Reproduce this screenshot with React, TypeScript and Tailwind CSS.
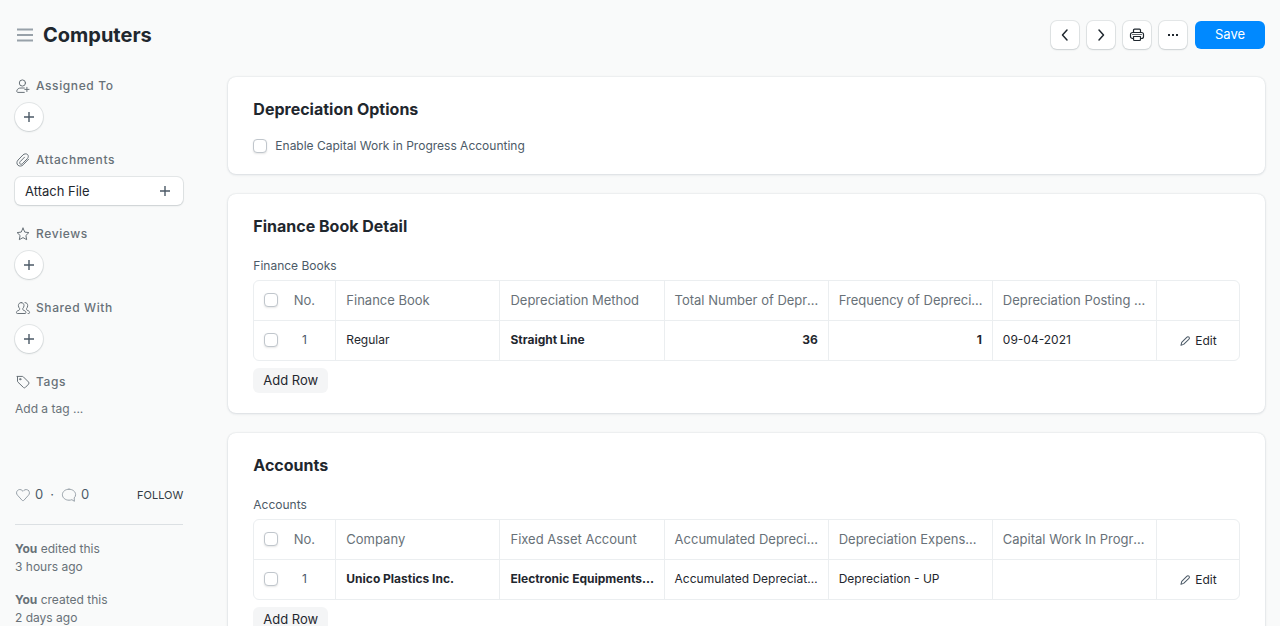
import type { ReactNode } from "react";

type IconProps = { className?: string; children: ReactNode; size?: string };

function Icon({ className = "", size = "size-4", children }: IconProps) {
  return (
    <svg
      viewBox="0 0 16 16"
      fill="none"
      stroke="currentColor"
      strokeLinecap="round"
      strokeLinejoin="round"
      aria-hidden="true"
      className={`shrink-0 ${size} ${className}`}
    >
      {children}
    </svg>
  );
}

const MenuIcon = () => (
  <Icon size="size-5" className="text-[#98a1a9]">
    <path d="M1.6 3.6h12.8M1.6 8h12.8M1.6 12.4h12.8" strokeWidth="1.5" strokeLinecap="butt" />
  </Icon>
);

const PlusIcon = () => (
  <Icon className="text-[#4c5a67]">
    <path d="M8 3v10M3 8h10" strokeWidth="1.4" strokeLinecap="butt" />
  </Icon>
);

const AssignIcon = () => (
  <Icon>
    <circle cx="7.4" cy="5" r="3.1" />
    <path d="M9.4 10H6c-2.300 0-3.800 1-4.200 2.800-.2.900.3 1.600 1.100 1.600h6.400M11.900 9.300v4.200M9.800 11.400H14" />
  </Icon>
);

const ClipIcon = () => (
  <Icon>
    <path d="M13.6 7.2l-5.4 5.6c-1.6 1.6-3.9 1.7-5.3.4-1.4-1.4-1.3-3.6.2-5.2l4.9-5.1c1.1-1.1 3.300-1.5 4.500-.4 1.200 1.100 1 3-.2 4.200l-4.900 5c-.7.700-1.700.800-2.300.2-.7-.6-.6-1.600.1-2.300l4.300-4.400" />
  </Icon>
);

const StarIcon = () => (
  <Icon>
    <path d="M8 2.2l1.8 3.9 4.1.5-3 2.9.8 4.2L8 11.6l-3.7 2.1.8-4.2-3-2.9 4.1-.5L8 2.2z" />
  </Icon>
);

const UsersIcon = () => (
  <Icon>
    <path d="M6.2 2.6c1.7 0 2.8 1.2 2.8 3 0 1.2-.5 2.2-1.2 2.8v1c0 .4.3.7.7.9l1.3.5c.7.3 1.1.9 1.1 1.6v.3c0 .5-.4.8-.8.8H2.3c-.5 0-.8-.3-.8-.8v-.3c0-.7.4-1.3 1.1-1.6l1.3-.5c.4-.2.7-.5.7-.9v-1C3.9 7.8 3.4 6.8 3.4 5.6c0-1.8 1.1-3 2.8-3z" />
    <path d="M10 2.6c1.7 0 2.7 1.2 2.7 3 0 1.2-.4 2.2-1.1 2.8v1c0 .4.2.7.6.9l1.300.5c.6.3 1 .9 1 1.6v.3c0 .5-.3.8-.8.8h-.6" />
  </Icon>
);

const TagIcon = () => (
  <Icon>
    <path d="M2 2.4h5.2c.4 0 .8.2 1.1.4l5.3 5.3c.5.5.5 1.4 0 2l-3.200 3.300c-.6.6-1.5.6-2 0L2.9 8.100c-.3-.3-.4-.7-.4-1.100V2.400" />
    <circle cx="5.2" cy="5.2" r=".7" />
  </Icon>
);

const HeartIcon = () => (
  <Icon className="text-[#98a1a9]">
    <path d="M13.5 3.500C12.200 2.200 10.100 2.200 8.800 3.500L8 4.300l-.8-.8C5.900 2.200 3.800 2.200 2.500 3.500c-1.300 1.300-1.300 3.400 0 4.700L7.300 13.500c.4.400 1 .4 1.400 0l4.800-5.300c1.300-1.300 1.300-3.400 0-4.700z" />
  </Icon>
);

const CommentIcon = () => (
  <Icon className="text-[#98a1a9]">
    <path d="M8 2.200c-3.700 0-6.600 2.400-6.600 5.500s2.900 5.500 6.600 5.500c1 0 2-.2 2.900-.5l2.500 1.600-.2-3.400c.9-.9 1.400-2 1.400-3.200 0-3.100-2.900-5.500-6.600-5.500z" />
  </Icon>
);

const PrinterIcon = () => (
  <Icon>
    <path
      d="M4.500 5V3.200c0-.6.400-1 1-1h5c.6 0 1 .4 1 1V5M4.500 11.500h-1c-1.100 0-2-.9-2-2V7.500c0-1.100.9-2 2-2h9c1.100 0 2 .9 2 2v2c0 1.100-.9 2-2 2h-1"
      strokeWidth="1.200"
    />
    <path d="M4.500 9.500v3c0 .6.400 1 1 1h5c.6 0 1-.4 1-1v-3z" strokeWidth="1.200" />
    <path d="M3.500 7.500h9" strokeWidth=".7" />
  </Icon>
);

const EditIcon = () => (
  <Icon size="size-3" className="text-[#4c5a67]">
    <path
      d="M10.300 3.100c.9-.9 2.200-1 3-.2.800.8.700 2.100-.2 3L6.200 12.500l-3.600 1.200 1-3.800 6.700-6.800z"
      strokeWidth="1.400"
    />
  </Icon>
);

const raised = "bg-white shadow-[0_0_0_1px_rgba(25,39,52,0.09),0_1px_2px_rgba(25,39,52,0.12)]";

function ToolButton({ label, children }: { label: string; children: ReactNode }) {
  return (
    <button
      type="button"
      aria-label={label}
      className={`flex size-7 items-center justify-center rounded-md text-[#1f272e] ${raised}`}
    >
      {children}
    </button>
  );
}

function Checkbox({ label, id }: { label?: string; id?: string }) {
  return (
    <input
      type="checkbox"
      id={id}
      aria-label={label}
      className="block size-3.5 shrink-0 appearance-none rounded border border-[#c0c6cc] bg-white shadow-[0_1px_2px_rgba(0,0,0,0.10)] checked:bg-[#0089ff]"
    />
  );
}

function SideSection({
  icon,
  title,
  children,
}: {
  icon: ReactNode;
  title: string;
  children: ReactNode;
}) {
  return (
    <section>
      <h2 className="flex h-[18px] items-center gap-[5px] text-xs font-medium tracking-wider text-[#687178]">
        {icon}
        {title}
      </h2>
      <div className="mt-2">{children}</div>
    </section>
  );
}

function RoundAdd({ label }: { label: string }) {
  return (
    <button
      type="button"
      aria-label={label}
      className={`flex size-7 items-center justify-center rounded-full ${raised}`}
    >
      <PlusIcon />
    </button>
  );
}

function Sidebar() {
  return (
    <aside className="w-1/6 shrink-0 pr-[30px] pl-[15px]">
      <div className="flex flex-col gap-5">
        <SideSection icon={<AssignIcon />} title="Assigned To">
          <RoundAdd label="Assign" />
        </SideSection>
        <SideSection icon={<ClipIcon />} title="Attachments">
          <button
            type="button"
            className={`flex h-7 w-full items-center justify-between rounded-md px-2.5 text-[13px] leading-[18px] text-[#1f272e] ${raised}`}
          >
            Attach File
            <PlusIcon />
          </button>
        </SideSection>
        <SideSection icon={<StarIcon />} title="Reviews">
          <RoundAdd label="Add review" />
        </SideSection>
        <SideSection icon={<UsersIcon />} title="Shared With">
          <RoundAdd label="Share" />
        </SideSection>
        <SideSection icon={<TagIcon />} title="Tags">
          <input
            type="text"
            aria-label="Add a tag"
            placeholder="Add a tag ..."
            className="block h-[18px] w-full bg-transparent text-xs placeholder:text-[#687178]"
          />
        </SideSection>
      </div>
      <div className="mt-[69px] flex h-[18px] items-center text-[13px] text-[#4c5a67]">
        <button type="button" aria-label="Like" className="flex items-center gap-1">
          <HeartIcon />0
        </button>
        <span className="px-[7px]">·</span>
        <button type="button" aria-label="Comments" className="flex items-center gap-1">
          <CommentIcon />0
        </button>
        <button type="button" className="ml-auto text-[11px] text-[#333c44]">
          FOLLOW
        </button>
      </div>
      <hr className="mt-5 mb-[15px] border-[#dce0e3]" />
      <div className="flex flex-col gap-[15px] text-xs leading-[18px] text-[#687178]">
        <p>
          <b>You</b> edited this
          <br />3 hours ago
        </p>
        <p>
          <b>You</b> created this
          <br />2 days ago
        </p>
      </div>
    </aside>
  );
}

function Card({ title, children }: { title: string; children: ReactNode }) {
  return (
    <section className="rounded-lg bg-white px-[25px] py-5 shadow-[0_0_2px_rgba(17,43,66,0.14),0_1px_3px_rgba(17,43,66,0.10)]">
      <h2 className="text-base leading-6 font-bold text-[#1f272e]">{title}</h2>
      {children}
    </section>
  );
}

type Cell = { text: string; bold?: boolean; right?: boolean };

function ChildTable({ label, heads, cells }: { label: string; heads: string[]; cells: Cell[] }) {
  const edge = "border-r border-[#ebeef0]";
  return (
    <>
      <p className="mt-5 mb-1.5 text-xs leading-4 text-[#4c5a67]">{label}</p>
      <table
        aria-label={label}
        className="w-full table-fixed border-separate border-spacing-0 rounded-md border border-[#ebeef0] text-left"
      >
        <colgroup>
          <col className="w-[82px]" />
          {heads.map((h) => (
            <col key={h} />
          ))}
          <col className="w-[82px]" />
        </colgroup>
        <thead>
          <tr className="h-10 text-[13px] leading-[18px] text-[#687178]">
            <th className={`border-b p-0 pb-px pl-2.5 font-normal ${edge}`}>
              <div className="flex items-center gap-3">
                <Checkbox label="Select all rows" />
                <span className="w-7 text-center">No.</span>
              </div>
            </th>
            {heads.map((h) => (
              <th key={h} className={`truncate border-b pt-0 pr-2 pb-px pl-2.5 font-normal ${edge}`}>
                {h}
              </th>
            ))}
            <th aria-label="Actions" className="border-b border-[#ebeef0] p-0" />
          </tr>
        </thead>
        <tbody>
          <tr className="h-[39px] text-xs leading-[18px] text-[#1f272e]">
            <td className={`p-0 pb-px pl-2.5 ${edge}`}>
              <div className="flex items-center gap-3">
                <Checkbox label="Select row 1" />
                <span className="w-7 text-center text-[#4c5a67]">1</span>
              </div>
            </td>
            {cells.map((c, i) => (
              <td
                key={i}
                className={`truncate pt-0 pb-px pl-2.5 ${edge} ${c.bold ? "font-bold" : ""} ${c.right ? "pr-2.5 text-right" : "pr-2"}`}
              >
                {c.text}
              </td>
            ))}
            <td className="p-0">
              <button type="button" className="mx-auto flex items-center gap-1">
                <EditIcon />
                Edit
              </button>
            </td>
          </tr>
        </tbody>
      </table>
      <button
        type="button"
        className="mt-[7px] h-[25px] rounded-md bg-[#f4f5f6] px-2.5 text-[13px] text-[#1f272e]"
      >
        Add Row
      </button>
    </>
  );
}

export default function App() {
  return (
    <div className="min-h-screen bg-[#f9fafa] font-['Inter',sans-serif] text-[#1f272e]">
      <header className="flex h-[70px] items-center px-[15px]">
        <button type="button" aria-label="Toggle sidebar">
          <MenuIcon />
        </button>
        <h1 className="ml-2 text-xl font-bold">Computers</h1>
        <div className="ml-auto flex items-center gap-2">
          <ToolButton label="Previous">
            <Icon>
              <path d="M10 3L5.500 8l4.500 5" strokeWidth="1.500" />
            </Icon>
          </ToolButton>
          <ToolButton label="Next">
            <Icon>
              <path d="M6 3l4.500 5L6 13" strokeWidth="1.500" />
            </Icon>
          </ToolButton>
          <ToolButton label="Print">
            <PrinterIcon />
          </ToolButton>
          <ToolButton label="More">
            <Icon>
              <path
                d="M3 7h2v2H3zM7 7h2v2H7zM11 7h2v2h-2z"
                fill="currentColor"
                stroke="none"
              />
            </Icon>
          </ToolButton>
          <button
            type="button"
            className="h-7 w-[70px] rounded-md bg-[#0089ff] text-[13px] text-white"
          >
            Save
          </button>
        </div>
      </header>
      <div className="flex pt-[7px]">
        <Sidebar />
        <main className="flex min-w-0 flex-1 flex-col gap-5 px-[15px]">
          <Card title="Depreciation Options">
            <div className="mt-[17px] flex h-4 items-center gap-2">
              <Checkbox id="cwip" />
              <label htmlFor="cwip" className="text-xs text-[#4c5a67]">
                Enable Capital Work in Progress Accounting
              </label>
            </div>
          </Card>
          <Card title="Finance Book Detail">
            <ChildTable
              label="Finance Books"
              heads={[
                "Finance Book",
                "Depreciation Method",
                "Total Number of Depreciations",
                "Frequency of Depreciation (Months)",
                "Depreciation Posting Date",
              ]}
              cells={[
                { text: "Regular" },
                { text: "Straight Line", bold: true },
                { text: "36", bold: true, right: true },
                { text: "1", bold: true, right: true },
                { text: "09-04-2021" },
              ]}
            />
          </Card>
          <Card title="Accounts">
            <ChildTable
              label="Accounts"
              heads={[
                "Company",
                "Fixed Asset Account",
                "Accumulated Depreciation Account",
                "Depreciation Expense Account",
                "Capital Work In Progress Account",
              ]}
              cells={[
                { text: "Unico Plastics Inc.", bold: true },
                { text: "Electronic Equipments - UP", bold: true },
                { text: "Accumulated Depreciation - UP" },
                { text: "Depreciation - UP" },
                { text: "" },
              ]}
            />
          </Card>
        </main>
      </div>
    </div>
  );
}
